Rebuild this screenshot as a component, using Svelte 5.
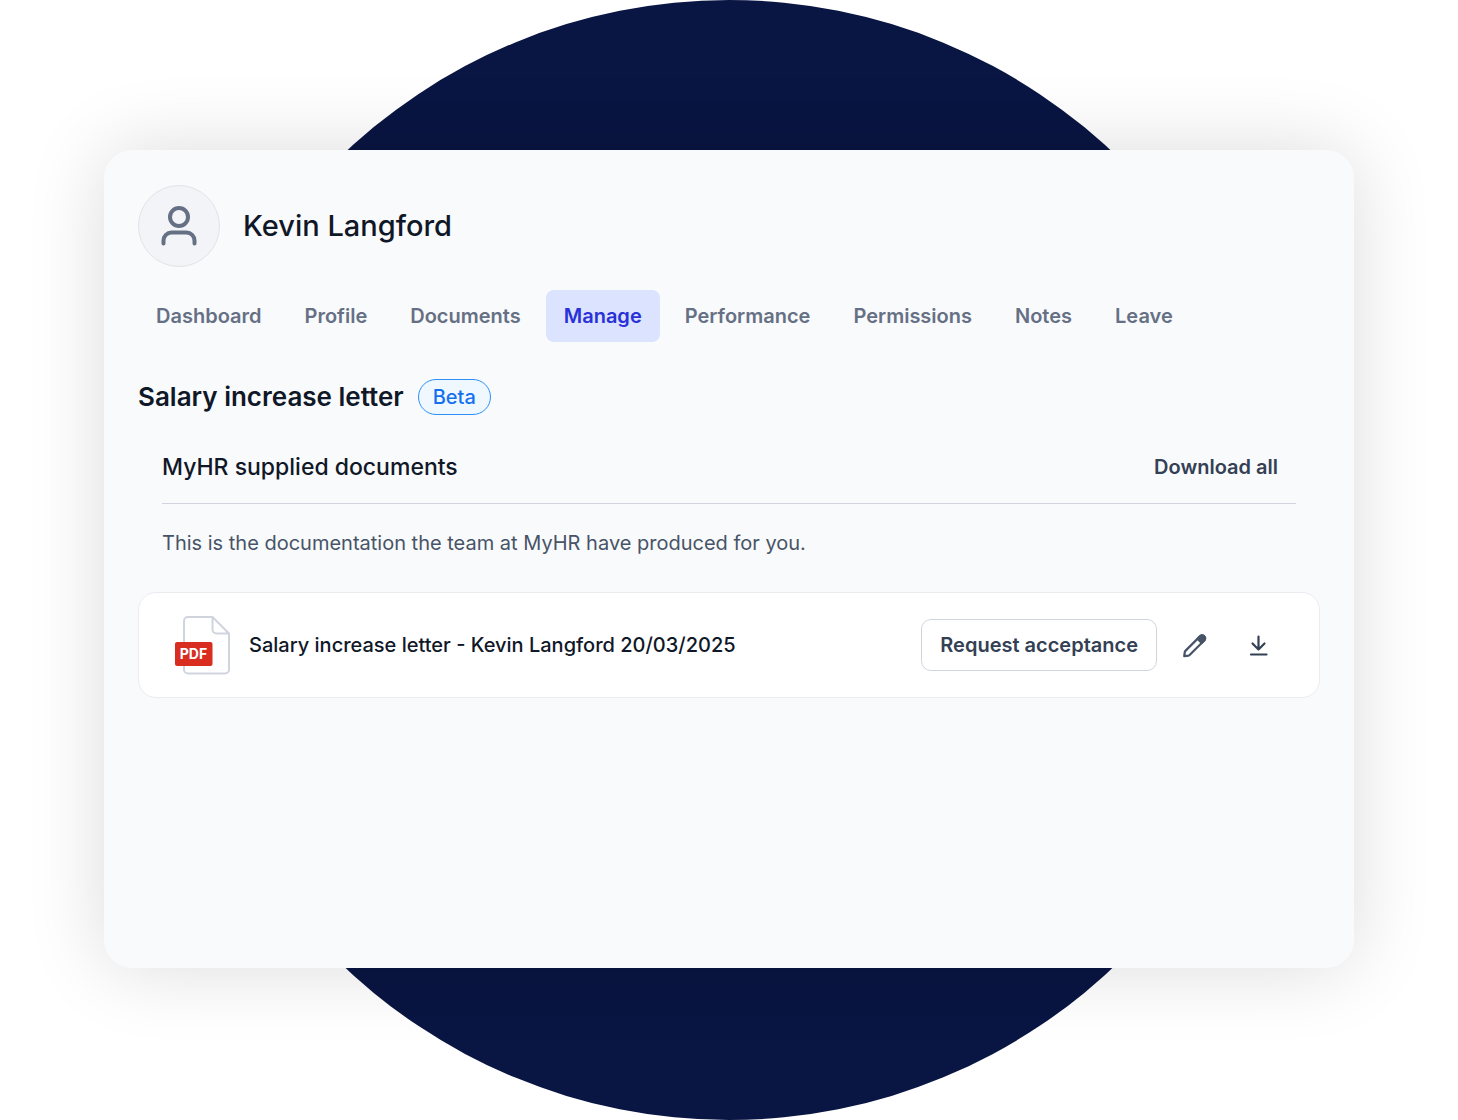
<script lang="ts">
	interface Tab {
		label: string;
		href: string;
	}

	const employee = 'Kevin Langford';

	const tabs: Tab[] = [
		{ label: 'Dashboard', href: '#dashboard' },
		{ label: 'Profile', href: '#profile' },
		{ label: 'Documents', href: '#documents' },
		{ label: 'Manage', href: '#manage' },
		{ label: 'Performance', href: '#performance' },
		{ label: 'Permissions', href: '#permissions' },
		{ label: 'Notes', href: '#notes' },
		{ label: 'Leave', href: '#leave' }
	];

	const documents = [{ name: 'Salary increase letter - Kevin Langford 20/03/2025' }];

	let active = $state('Manage');
</script>

<div class="stage">
	<main class="card">
		<header class="profile">
			<div class="avatar">
				<svg width="40" height="42" viewBox="0 0 40 42" fill="none" stroke="currentColor" stroke-width="4" stroke-linecap="round" aria-hidden="true">
					<circle cx="20" cy="12" r="9" />
					<path d="M4.5 38.5v-3a8 8 0 0 1 8-8h15a8 8 0 0 1 8 8v3" />
				</svg>
			</div>
			<h1>{employee}</h1>
		</header>

		<nav class="tabs" aria-label="Employee">
			{#each tabs as tab}
				<a
					href={tab.href}
					class="tab"
					class:active={active === tab.label}
					aria-current={active === tab.label ? 'page' : undefined}
					onclick={() => (active = tab.label)}>{tab.label}</a
				>
			{/each}
		</nav>

		<div class="title">
			<h2>Salary increase letter</h2>
			<span class="badge">Beta</span>
		</div>

		<section>
			<div class="section-intro">
				<div class="section-header">
					<h3>MyHR supplied documents</h3>
					<button class="link-btn">Download all</button>
				</div>
				<p>This is the documentation the team at MyHR have produced for you.</p>
			</div>

			<ul class="documents">
				{#each documents as doc}
					<li class="document">
						<svg class="file-icon" width="58" height="60" viewBox="0 0 58 60" fill="none" aria-hidden="true">
							<path
								d="M39.5 2H15a4 4 0 0 0-4 4v48.5a4 4 0 0 0 4 4h37a4 4 0 0 0 4-4V18.5L39.5 2v12.5a4 4 0 0 0 4 4H56"
								stroke="#d0d5dd"
								stroke-width="2"
								stroke-linejoin="round"
							/>
							<rect x="2" y="27" width="37.5" height="24" rx="2" fill="#d92d20" />
							<text x="20.5" y="44" text-anchor="middle" fill="#fff">PDF</text>
						</svg>
						<span class="document-name">{doc.name}</span>
						<button class="btn">Request acceptance</button>
						<button class="icon-btn" aria-label="Edit document">
							<svg width="28" height="28" viewBox="0 0 28 28" fill="none" stroke="currentColor" stroke-width="2.2" stroke-linejoin="round" aria-hidden="true">
								<path d="M3.2 25.2l.6-4.2a2 2 0 0 1 .6-1.1L19.2 5.1a3 3 0 0 1 4.2 4.2L8.6 24a2 2 0 0 1-1.1.6z" />
								<path d="M16.5 7.8l2.7-2.7a3 3 0 0 1 4.2 4.2L20.7 12z" fill="currentColor" />
							</svg>
						</button>
						<button class="icon-btn download" aria-label="Download document">
							<svg width="28" height="28" viewBox="0 0 28 28" fill="none" stroke="currentColor" stroke-width="2.2" stroke-linecap="round" stroke-linejoin="round" aria-hidden="true">
								<path d="M13.5 5.5v13M7.5 12.5l6 6 6-6M6 23.5h15.5" />
							</svg>
						</button>
					</li>
				{/each}
			</ul>
		</section>
	</main>
</div>

<style>
	:global(body) {
		background: #fff;
		font-family: Inter, 'Liberation Sans', sans-serif;
	}

	.stage {
		position: relative;
		display: flex;
		box-sizing: border-box;
		min-height: 100vh;
		padding: 150px 104px 152px;
		overflow: hidden;
	}

	.stage::before {
		content: '';
		position: absolute;
		top: 0;
		left: 50%;
		height: 100%;
		aspect-ratio: 1;
		border-radius: 50%;
		background: #091542;
		transform: translateX(-50%);
	}

	.card {
		position: relative;
		flex: 1;
		min-width: 0;
		box-sizing: border-box;
		padding: 35px 34px 34px;
		border-radius: 28px;
		background: #f9fafc;
		box-shadow: 0 0 80px rgba(0, 0, 0, 0.14);
		color: #101828;
	}

	h1,
	h2,
	h3,
	p,
	ul {
		margin: 0;
		padding: 0;
	}

	.profile {
		display: flex;
		align-items: center;
		gap: 23px;
	}

	.avatar {
		display: flex;
		align-items: center;
		justify-content: center;
		box-sizing: border-box;
		width: 82px;
		height: 82px;
		border: 1px solid #e2e3e6;
		border-radius: 50%;
		background: #f2f4f7;
		color: #667085;
	}

	h1 {
		font-size: 29px;
		font-weight: 500;
		line-height: 40px;
	}

	.tabs {
		display: flex;
		flex-wrap: wrap;
		gap: 7px;
		margin-top: 23px;
	}

	.tab {
		padding: 11px 18px;
		border-radius: 8px;
		color: #667085;
		font-size: 20px;
		font-weight: 600;
		line-height: 30px;
		text-decoration: none;
	}

	.tab.active {
		background: #dbe3fe;
		color: #2a31d8;
	}

	.title {
		display: flex;
		align-items: center;
		gap: 14px;
		margin-top: 37px;
	}

	h2 {
		font-size: 26px;
		font-weight: 600;
		line-height: 36px;
	}

	.badge {
		padding: 2px 14px;
		border: 1px solid #2e90fa;
		border-radius: 18px;
		background: #eff8ff;
		color: #1570ef;
		font-size: 20px;
		font-weight: 500;
		line-height: 30px;
	}

	.section-intro {
		margin: 32px 24px 0;
	}

	.section-header {
		display: flex;
		align-items: center;
		justify-content: space-between;
		padding: 0 18px 16px 0;
		border-bottom: 1px solid #d0d5dd;
	}

	h3 {
		font-size: 23px;
		font-weight: 500;
		line-height: 40px;
	}

	.link-btn {
		padding: 0;
		border: none;
		background: transparent;
		color: #344054;
		font-family: inherit;
		font-size: 20px;
		font-weight: 600;
		line-height: 40px;
		cursor: pointer;
	}

	p {
		margin-top: 24px;
		color: #475467;
		font-size: 20px;
		line-height: 30px;
	}

	.documents {
		margin-top: 34px;
		list-style: none;
	}

	.document {
		display: flex;
		align-items: center;
		padding: 22px 34px;
		border: 1px solid #eaecf0;
		border-radius: 18px;
		background: #fff;
	}

	.file-icon {
		flex: none;
		margin-right: 18px;
	}

	.file-icon text {
		font-size: 14px;
		font-weight: 700;
	}

	.document-name {
		flex: 1;
		font-size: 20px;
		font-weight: 500;
		line-height: 30px;
	}

	.btn {
		padding: 10px 18px;
		border: 1px solid #d0d5dd;
		border-radius: 10px;
		background: #fff;
		color: #344054;
		font-family: inherit;
		font-size: 20px;
		font-weight: 600;
		line-height: 30px;
		cursor: pointer;
	}

	.icon-btn {
		display: flex;
		margin-left: 12px;
		padding: 12px;
		border: none;
		border-radius: 10px;
		background: transparent;
		color: #475467;
		cursor: pointer;
	}

	.icon-btn.download {
		color: #344054;
	}

	.tab:hover:not(.active),
	.btn:hover,
	.icon-btn:hover {
		background: #f2f4f7;
	}
</style>
